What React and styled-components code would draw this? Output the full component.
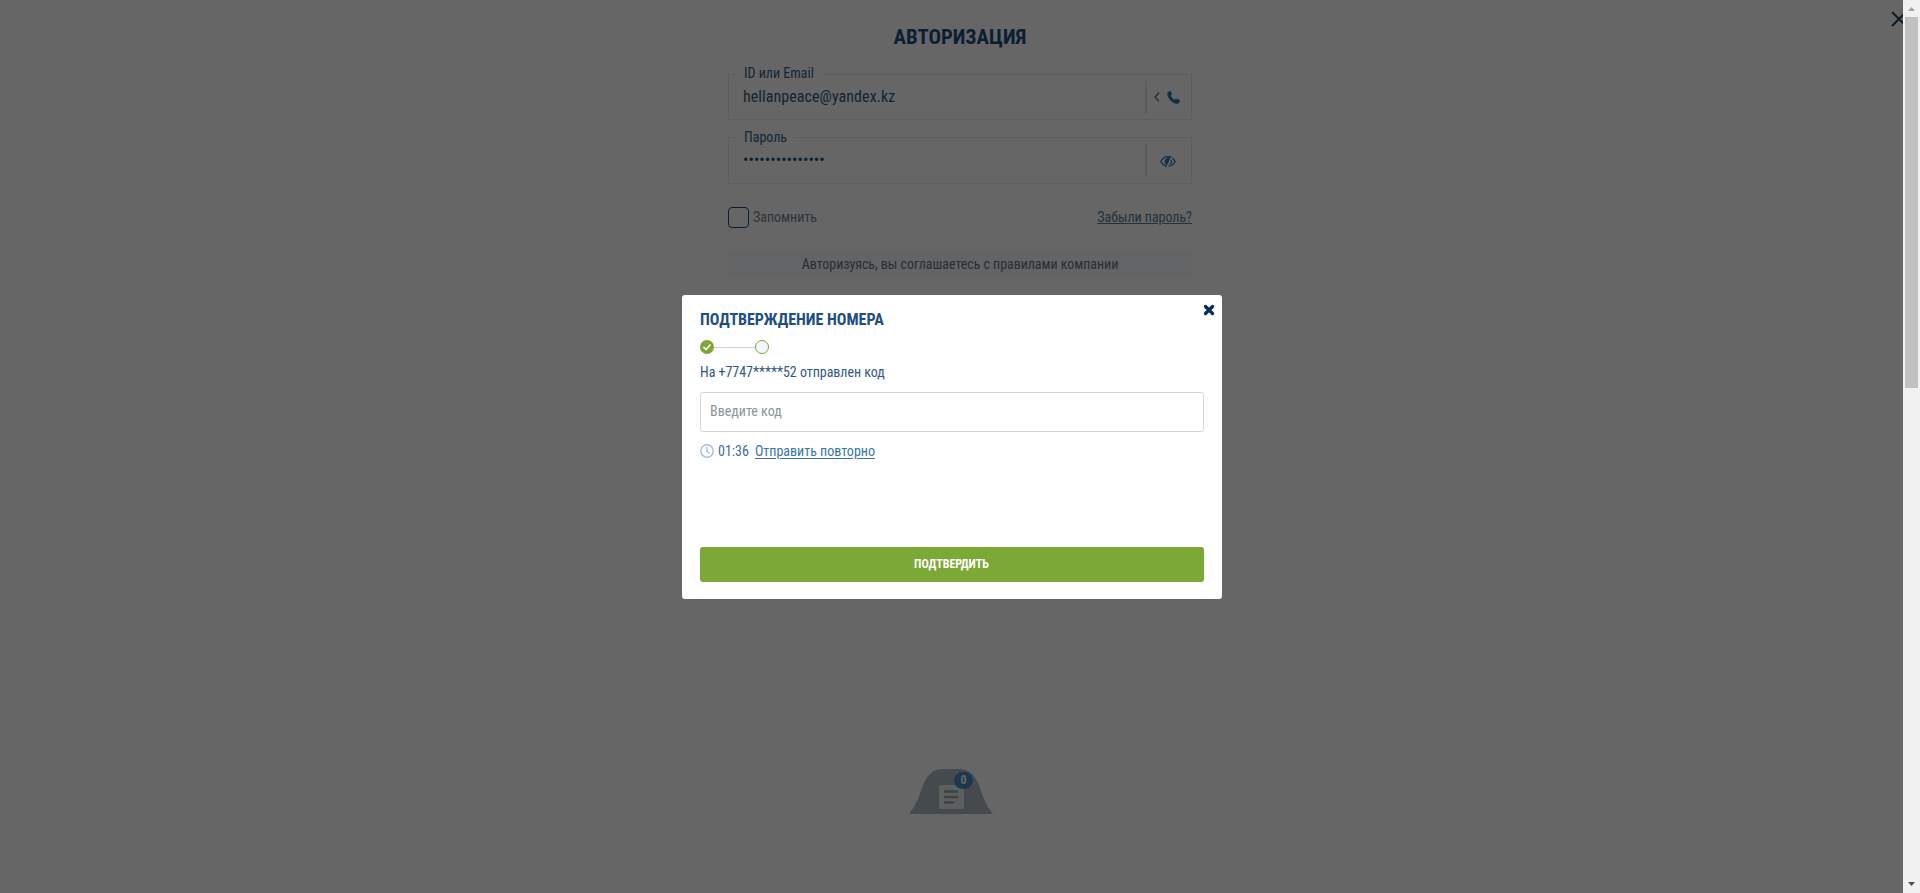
import React from "react";
import styled, { createGlobalStyle } from "styled-components";

const Global = createGlobalStyle`
  *{box-sizing:border-box}
  html,body{margin:0;height:100%;overflow:hidden;background:#fff}
  body{font-family:"Roboto Condensed",Roboto,sans-serif;font-stretch:75%;font-size:14px;line-height:20px;color:#204f80}
`;
const Screen = styled.div`position:relative;width:1920px;height:893px;overflow:hidden;background:#fff;`;
const Form = styled.form`width:464px;margin:0 auto;padding-top:22px;display:flex;flex-direction:column;`;
const Title = styled.h1`margin:0 0 22px;font-size:20.8px;line-height:30px;font-weight:700;text-align:center;color:#1d4f83;`;
const Field = styled.div`position:relative;display:flex;align-items:center;height:${p => p.$h}px;margin-bottom:${p => p.$gap}px;border:1px solid #e9ecef;`;
const Label = styled.label`position:absolute;top:${p => p.$top}px;left:9px;padding:0 7px 0 6px;background:#fff;color:#356389;`;
const Value = styled.span`flex:1;padding-left:14px;font-size:16px;letter-spacing:.06px;color:#38597f;`;
const Dots = styled.span`flex:1;padding-left:14px;font-size:16px;line-height:16px;letter-spacing:.05px;color:#1d4f83;padding-bottom:1px;`;
const Action = styled.div`width:46px;height:33px;border-left:2px solid #e2e5e8;display:flex;align-items:center;justify-content:center;gap:7px;padding:${p => p.$pad || "0 4px 0 0"};`;
const Row = styled.div`display:flex;align-items:center;height:21px;margin-bottom:23px;color:#71828f;span,a{position:relative}`;
const Check = styled.span`width:21px;height:21px;border:1px solid #1d4f83;border-radius:4px;margin-right:4px;`;
const Remember = styled.span`margin-bottom:2px;letter-spacing:-.02px;`;
const Forgot = styled.a`margin:0 0 2px auto;text-decoration:underline;letter-spacing:-.03px;color:#587d97;`;
const Agree = styled.div`height:26px;line-height:27px;text-align:center;background:#f6f9fd;color:#61778c;letter-spacing:-.05px;`;
const PageClose = styled.svg`position:absolute;left:1891px;top:11px;`;
const Dock = styled.div`position:absolute;left:909px;top:769px;width:84px;height:45px;svg{display:block}`;
const Badge = styled.span`position:absolute;left:45px;top:3px;width:19px;height:17px;border-radius:9px;background:#468bc4;color:#fff;font-size:12px;line-height:16px;font-weight:700;text-align:center;`;
const Overlay = styled.div`position:absolute;inset:0 17px 0 0;background:rgba(0,0,0,.6);display:flex;align-items:center;justify-content:center;padding:1px 0 0 1px;`;
const Modal = styled.section`position:relative;width:540px;height:304px;border-radius:3px;background:#fff;padding:16px 18px 17px;display:flex;flex-direction:column;`;
const ModalTitle = styled.h2`margin:0;font-size:16px;line-height:18px;font-weight:700;letter-spacing:-.02px;color:#1f4e82;`;
const ModalClose = styled.svg`position:absolute;right:7px;top:9px;`;
const Steps = styled.div`display:flex;align-items:center;height:14px;margin-top:11px;svg{display:block}`;
const Line = styled.i`width:41px;height:1px;background:#c8d5e1;`;
const Empty = styled.i`width:14px;height:14px;border-radius:50%;border:1px solid #7ca836;background:#f3f7fb;`;
const Sent = styled.p`margin:8px 0 10px;letter-spacing:-.03px;color:#315984;`;
const Input = styled.input`display:block;width:100%;height:40px;flex:none;padding:0 9px 2px;border:1px solid #ced8d8;border-radius:3px;font:inherit;outline:0;&::placeholder{color:#8b949c;opacity:1}`;
const Resend = styled.div`display:flex;align-items:center;height:20px;margin-top:9px;color:#3d6d9d;svg{margin-right:4px}`;
const Link = styled.a`margin-left:6px;text-decoration:underline;text-underline-offset:2px;color:#3975ab;`;
const Button = styled.button`margin-top:auto;height:35px;border:0;border-radius:3px;background:#7ca836;color:#fff;font:700 12px/20px "Roboto Condensed",Roboto,sans-serif;font-stretch:75%;padding:0 1px 2px 0;`;
const Scroll = styled.div`position:absolute;right:0;top:0;bottom:0;width:17px;background:#f1f1f1;display:flex;flex-direction:column;align-items:center;`;
const Arrow = styled.svg`display:block;width:17px;height:17px;flex:none;`;
const Thumb = styled.div`width:13px;height:371px;background:#c1c1c1;margin-bottom:auto;`;

export default function App() {
  return (
    <Screen>
      <Global />
      <Form>
        <Title>АВТОРИЗАЦИЯ</Title>
        <Field $h={46} $gap={17}>
          <Label $top={-12}>ID или Email</Label>
          <Value>hellanpeace@yandex.kz</Value>
          <Action>
            <svg width="6" height="10" viewBox="0 0 6 10" fill="none" stroke="#477ba9" strokeWidth="1.4"><path d="M5 .7 1 5l4 4.3" /></svg>
            <svg width="13" height="13" viewBox="0 0 13 13" fill="#3871a5"><path d="M2.5.2 3.7 0l1.4 3.2-1.4 1.4q1.2 2.8 4 4.2l1.5-1.3L13 9.3q.1 2-1.4 3.1-1.5.9-4.1-.2Q2.600 10 .7 5.300-.8 1.300 2.500.2Z" /></svg>
          </Action>
        </Field>
        <Field $h={47} $gap={23}>
          <Label $top={-11}>Пароль</Label>
          <Dots>•••••••••••••••</Dots>
          <Action $pad="1px 2px 0 0">
            <svg width="16" height="13" viewBox="0 0 16 13" fill="none" stroke="#3871a5" strokeWidth="1.2"><path d="M6.500 11Q2.900 10.200.7 6.500 3.500 1.700 8 1.700l2 .3M12 2.900q2 1.200 3.300 3.600-2.600 4.500-6.900 4.700M10.700 1 5.500 12M11.200 5q1 3-1.700 4.300" /><path d="M9.800 2.600 6.300 9.500Q3.800 7.700 5 5q1.600-2.700 4.800-2.400Z" fill="#3871a5" stroke="none" /></svg>
          </Action>
        </Field>
        <Row><Check /><Remember>Запомнить</Remember><Forgot>Забыли пароль?</Forgot></Row>
        <Agree>Авторизуясь, вы соглашаетесь с правилами компании</Agree>
      </Form>
      <PageClose width="16" height="16" viewBox="0 0 16 16" stroke="#244563" strokeWidth="2"><path d="m1 1 14 14M15 1 1 15" /></PageClose>
      <Dock>
        <svg width="84" height="45" viewBox="0 0 84 45"><path d="M0 45C11 31 11 21 17 10Q23 0 33 0H51Q61 0 67 10C73 21 73 31 84 45Z" fill="#adb9c2" /><rect x="30" y="16" width="25" height="24" rx="2" fill="#eceff1" /><path d="M35 22.500H49M35 28H49M35 33.500H45" stroke="#98a6b0" strokeWidth="2.500" /></svg>
        <Badge>0</Badge>
      </Dock>
      <Overlay>
        <Modal>
          <ModalTitle>ПОДТВЕРЖДЕНИЕ НОМЕРА</ModalTitle>
          <ModalClose width="12" height="12" viewBox="0 0 12 12" stroke="#052d5c" strokeWidth="3.300" strokeLinecap="round"><path d="m2.500 2.500 7 7M9.500 2.500l-7 7" /></ModalClose>
          <Steps>
            <svg width="14" height="14" viewBox="0 0 14 14"><circle cx="7" cy="7" r="7" fill="#7ca836" /><path d="m3.500 7 2.500 2.500 4.500-5" fill="none" stroke="#fff" strokeWidth="1.600" /></svg>
            <Line /><Empty />
          </Steps>
          <Sent>На +7747*****52 отправлен код</Sent>
          <Input placeholder="Введите код" />
          <Resend>
            <svg width="14" height="14" viewBox="0 0 14 14" fill="none" stroke="#a1bfdb" strokeWidth="1.400"><circle cx="7" cy="7" r="6.200" /><path d="M7 3v4.500l2.500 2" /></svg>
            <span>01:36</span><Link>Отправить повторно</Link>
          </Resend>
          <Button type="button">ПОДТВЕРДИТЬ</Button>
        </Modal>
      </Overlay>
      <Scroll>
        <Arrow viewBox="0 0 17 17"><path d="M5 11h7L8.500 7Z" fill="#a3a3a3" /></Arrow>
        <Thumb />
        <Arrow viewBox="0 0 17 17"><path d="M5 6h7l-3.500 4Z" fill="#505050" /></Arrow>
      </Scroll>
    </Screen>
  );
}
